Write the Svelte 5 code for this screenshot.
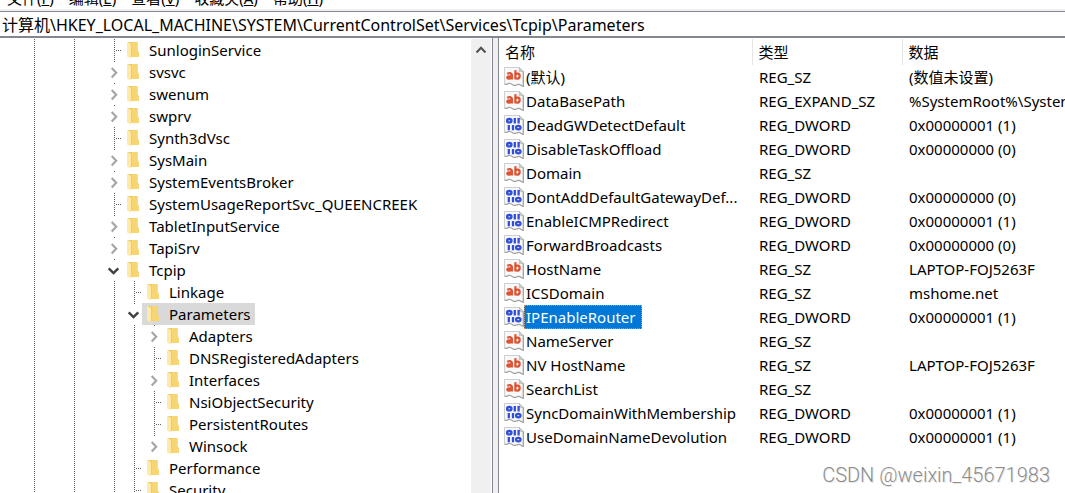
<script>
  const menus = [
    ['文件', 'F'],
    ['编辑', 'E'],
    ['查看', 'V'],
    ['收藏夹', 'A'],
    ['帮助', 'H'],
  ];

  // guides: l = line, b = blank, n = branch, c = collapsed, o = open
  const tree = [
    ['SunloginService', 'lblbn'],
    ['svsvc', 'lblbc'],
    ['swenum', 'lblbc'],
    ['swprv', 'lblbc'],
    ['Synth3dVsc', 'lblbn'],
    ['SysMain', 'lblbc'],
    ['SystemEventsBroker', 'lblbc'],
    ['SystemUsageReportSvc_QUEENCREEK', 'lblbn'],
    ['TabletInputService', 'lblbc'],
    ['TapiSrv', 'lblbc'],
    ['Tcpip', 'lblbo'],
    ['Linkage', 'lblbln'],
    ['Parameters', 'lblblo'],
    ['Adapters', 'lblbllc'],
    ['DNSRegisteredAdapters', 'lblblln'],
    ['Interfaces', 'lblbllc'],
    ['NsiObjectSecurity', 'lblblln'],
    ['PersistentRoutes', 'lblblln'],
    ['Winsock', 'lblbllc'],
    ['Performance', 'lblbln'],
    ['Security', 'lblbln'],
  ];

  const one = '0x00000001 (1)';
  const zero = '0x00000000 (0)';
  const values = [
    ['(默认)', 'REG_SZ', '(数值未设置)'],
    ['DataBasePath', 'REG_EXPAND_SZ', '%SystemRoot%\\System32\\drivers\\etc'],
    ['DeadGWDetectDefault', 'REG_DWORD', one],
    ['DisableTaskOffload', 'REG_DWORD', zero],
    ['Domain', 'REG_SZ', ''],
    ['DontAddDefaultGatewayDef...', 'REG_DWORD', zero],
    ['EnableICMPRedirect', 'REG_DWORD', one],
    ['ForwardBroadcasts', 'REG_DWORD', zero],
    ['HostName', 'REG_SZ', 'LAPTOP-FOJ5263F'],
    ['ICSDomain', 'REG_SZ', 'mshome.net'],
    ['IPEnableRouter', 'REG_DWORD', one],
    ['NameServer', 'REG_SZ', ''],
    ['NV HostName', 'REG_SZ', 'LAPTOP-FOJ5263F'],
    ['SearchList', 'REG_SZ', ''],
    ['SyncDomainWithMembership', 'REG_DWORD', one],
    ['UseDomainNameDevolution', 'REG_DWORD', one],
  ];

  let path = $state('计算机\\HKEY_LOCAL_MACHINE\\SYSTEM\\CurrentControlSet\\Services\\Tcpip\\Parameters');
  let selectedKey = $state('Parameters');
  let selectedValue = $state('IPEnableRouter');
</script>

<div class="window">
  <nav class="menubar">
    {#each menus as [label, key]}
      <button>{label}(<u>{key}</u>)</button>
    {/each}
  </nav>
  <input class="address" aria-label="地址" spellcheck="false" bind:value={path} />
  <main class="panes">
    <section class="keys">
      <ul class="tree">
        {#each tree as [name, guides]}
          <li>
            {#each guides as g}
              {#if g === 'c' || g === 'o'}
                <button class="guide" aria-label={g === 'o' ? '折叠' : '展开'}>
                  <svg width="20" height="22" viewBox="0 0 20 22">
                    <path class="dots" d="M12.5 0V1" />
                    {#if g === 'c'}
                      <path class="chev" d="M9.7 7L14.2 11.8L9.7 16.6" />
                    {:else}
                      <path class="chev open" d="M6.7 9.3L11.5 14L16.3 9.3" />
                    {/if}
                  </svg>
                </button>
              {:else}
                <span class="guide">
                  <svg width="20" height="22" viewBox="0 0 20 22">
                    {#if g !== 'b'}<path class="dots" d="M12.5 0V22" />{/if}
                    {#if g === 'n'}<path class="dots" d="M14 11.5H20" />{/if}
                  </svg>
                </span>
              {/if}
            {/each}
            <button class="key" class:selected={name === selectedKey} onclick={() => (selectedKey = name)}>
              <svg width="12" height="18" viewBox="0 0 12 18">
                <path d="M1 1H10.5V10L12 11V16H3Z" fill="#f0cb68" />
                <path d="M5 1H10.5V10L12 11V16H5Z" fill="#f7d573" />
                <path d="M0 1L4 3V17.5L0 15.5Z" fill="#ffe9a6" />
              </svg>
              {name}
            </button>
          </li>
        {/each}
      </ul>
      <div class="scrollbar">
        <button aria-label="向上滚动">
          <svg width="20" height="22" viewBox="0 0 20 22">
            <path d="M5.5 13.5L10 8.8L14.5 13.5" fill="none" stroke="#505050" stroke-width="2" />
          </svg>
        </button>
      </div>
    </section>
    <section class="values">
      <table>
        <colgroup><col class="c-name" /><col class="c-type" /><col /></colgroup>
        <thead>
          <tr><th>名称</th><th>类型</th><th>数据</th></tr>
        </thead>
        <tbody>
          {#each values as [name, type, data]}
            <tr>
              <td>
                <button class="value" onclick={() => (selectedValue = name)}>
                  <svg width="20" height="20" viewBox="0 0 20 20">
                    <path d="M.5 .5H15.5L19.5 4.5V19.5L15.5 17.2L10 18.8L5.5 16.2L.5 17.5Z" fill="#f8f8f8" />
                    <path d="M.5 17V.5H15.5" fill="none" stroke="#cfcfcf" />
                    <path d="M19.3 4V19.3C17 19 16.5 17 14.5 17.3C12 18 11.5 19.3 9 18C7 16.5 5.5 15.7 3.5 17C2.5 17.7 1.5 17.5 .5 17" fill="none" stroke="#a2a2a2" stroke-width="1.3" />
                    <path d="M15.3 .5V4.6H19.5Z" fill="#c9c9c9" stroke="#b0b0b0" stroke-width=".6" />
                    {#if type === 'REG_DWORD'}
                      <g fill="none" stroke="#2f4fd8" stroke-width="2.3">
                        <ellipse cx="5.3" cy="5.7" rx="2.2" ry="1.7" />
                        <path d="M10.8 3V8.4M14.6 3V8.4M4.8 9.9V15.2M9 9.9V15.2" />
                        <ellipse cx="14.3" cy="12.6" rx="2.2" ry="1.7" />
                      </g>
                    {:else}
                      <g fill="none" stroke="#dc5434" stroke-width="2.3">
                        <path d="M3.2 6.8C6 5.6 7.9 6.2 7.9 8.2V12.6M7.9 9.2C4.5 9 3.2 9.7 3.3 10.7C3.5 12.2 6.8 11.8 7.9 10.1" />
                        <path d="M11.4 3.2V12.6M11.4 7.8C12.5 6.2 15.6 6.1 15.6 9C15.6 12.1 12.5 12.1 11.4 10.6" />
                      </g>
                    {/if}
                  </svg>
                  <span class:selected={name === selectedValue}>{name}</span>
                </button>
              </td>
              <td>{type}</td>
              <td>{data}</td>
            </tr>
          {/each}
        </tbody>
      </table>
    </section>
  </main>
  <div class="watermark">CSDN @weixin_45671983</div>
</div>

<style>
  :global(body) {
    margin: 0;
  }
  .window {
    position: relative;
    display: flex;
    flex-direction: column;
    height: 100vh;
    overflow: hidden;
    background: #fff;
    color: #000;
    font: 15px/22px "Noto Sans", "Noto Sans CJK SC", sans-serif;
  }
  button {
    border: 0;
    padding: 0;
    background: none;
    color: inherit;
    font: inherit;
    white-space: nowrap;
  }
  svg {
    display: block;
    flex: none;
  }
  .menubar {
    display: flex;
    flex: none;
    align-items: flex-end;
    gap: 15px;
    height: 9px;
    padding-left: 7px;
    border-bottom: 2px solid #f0f0f0;
  }
  .address {
    flex: none;
    height: 27px;
    box-sizing: border-box;
    border: solid #828790;
    border-width: 1px 0 2px;
    padding: 0 2px 1px;
    font: inherit;
    font-size: 16px;
    color: inherit;
    outline: 0;
  }
  .panes {
    display: flex;
    flex: 1;
    min-height: 0;
  }
  .keys {
    display: flex;
    flex: 0 0 46.2%;
    min-width: 0;
    border-right: 1px solid #828790;
    padding-top: 1px;
  }
  .tree {
    flex: 1;
    min-width: 0;
    margin: 0;
    padding: 0 0 0 22px;
    list-style: none;
    overflow: hidden;
  }
  li {
    display: flex;
    height: 22px;
  }
  .guide {
    flex: none;
    width: 20px;
  }
  .dots {
    fill: none;
    stroke: #606060;
    stroke-dasharray: 1 1;
  }
  .chev {
    fill: none;
    stroke: #a6a6a6;
    stroke-width: 2.2;
  }
  .chev.open {
    stroke: #404040;
    stroke-width: 2.4;
  }
  .key {
    display: flex;
    align-items: center;
    gap: 10px;
    padding: 0 4px 0 5px;
  }
  .key.selected {
    background: #d9d9d9;
  }
  .scrollbar {
    flex: none;
    width: 20px;
    margin-right: 1px;
    background: #f0f0f0;
  }
  .values {
    flex: 1;
    min-width: 0;
    overflow: hidden;
    padding-top: 1px;
    border-left: 1px solid #828790;
    box-shadow: -5px 0 #f0f0f0;
    margin-left: 5px;
  }
  table {
    width: 100%;
    table-layout: fixed;
    border-collapse: collapse;
  }
  .c-name {
    width: 253px;
  }
  .c-type {
    width: 150px;
  }
  th {
    height: 26px;
    padding: 0 6px;
    border-right: 1px solid #e5e5e5;
    font-weight: 400;
    text-align: left;
  }
  th:last-child {
    border-right: 0;
  }
  td {
    height: 24px;
    padding: 0 7px;
    white-space: nowrap;
  }
  td:first-child {
    padding: 0 0 0 5px;
  }
  .value {
    display: flex;
    align-items: center;
  }
  .value span {
    border: 1px solid transparent;
    padding: 0 5px 0 1px;
  }
  .value .selected {
    border: 1px dotted #ff8728;
    background: #0078d7;
    color: #fff;
  }
  .watermark {
    position: absolute;
    right: 15px;
    bottom: 6px;
    color: #8c8c8c;
    font: 300 20px/24px Roboto, "Liberation Sans", sans-serif;
    text-shadow: 1px 1px #e8e8e8;
  }
</style>
